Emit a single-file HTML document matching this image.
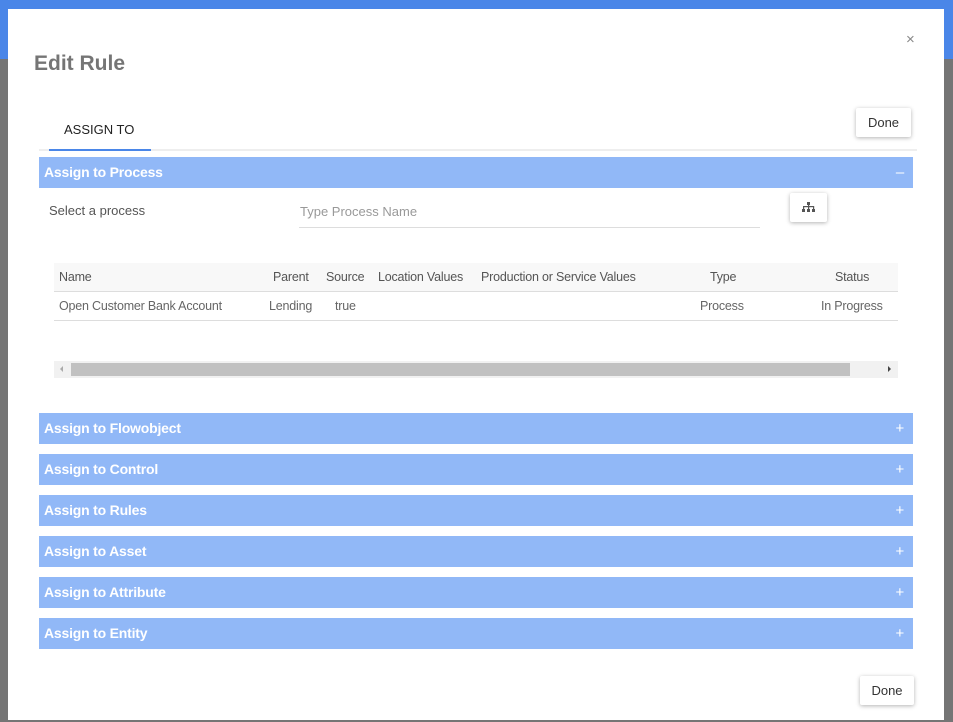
<!DOCTYPE html>
<html><head><style>
body{margin:0;width:953px;height:722px;position:relative;overflow:hidden;background:#757575;font-family:"Liberation Sans",sans-serif;}
.top{position:absolute;left:0;top:0;width:953px;height:59px;background:#4a86e8;}
.modal{position:absolute;left:8px;top:9px;width:936px;height:711px;background:#fff;}
.abs{position:absolute;}
.bar{position:absolute;left:31px;width:874px;height:31px;background:#91b8f7;color:#fff;font-weight:bold;font-size:14px;line-height:31px;letter-spacing:-0.2px;}
.bar span{position:absolute;left:5px;}
.bar i{position:absolute;right:9px;font-style:normal;font-weight:normal;font-size:15px;}
.btn{position:absolute;background:#fff;box-shadow:0 1px 4px rgba(0,0,0,.3);border-radius:2px;font-size:13px;color:#333;text-align:center;}
.th{position:absolute;top:270px;font-size:12.5px;color:#555;letter-spacing:-0.2px;}
.td{position:absolute;top:299px;font-size:12.5px;color:#666;letter-spacing:-0.2px;}
</style></head><body>
<div class="top"></div>
<div class="modal">
<div class="abs" style="left:26px;top:43px;font-size:21px;font-weight:bold;color:#757575">Edit Rule</div>
<div class="abs" style="left:898px;top:22px;font-size:15px;color:#888">×</div>
<div class="abs" style="left:56px;top:113px;font-size:13px;color:#222">ASSIGN TO</div>
<div class="abs" style="left:31px;top:140px;width:878px;height:2px;background:#eee"></div>
<div class="abs" style="left:41px;top:140px;width:102px;height:2px;background:#4a86e8"></div>
<div class="btn" style="left:848px;top:99px;width:55px;height:29px;line-height:29px">Done</div>
<div class="bar" style="top:148px"><span>Assign to Process</span><i>–</i></div>
<div class="abs" style="left:41px;top:194px;font-size:13px;color:#555">Select a process</div>
<div class="abs" style="left:292px;top:195px;font-size:13px;color:#999">Type Process Name</div>
<div class="abs" style="left:291px;top:218px;width:461px;height:1px;background:#ddd"></div>
<div class="btn" style="left:782px;top:184px;width:37px;height:29px">
<svg class="abs" style="left:12px;top:9px" width="13" height="11" viewBox="0 0 13 11" fill="#555"><rect x="5" y="0" width="3" height="3"/><rect x="1" y="4" width="11" height="1.2"/><rect x="1" y="4" width="1.2" height="3"/><rect x="6" y="3" width="1.2" height="4"/><rect x="11" y="4" width="1.2" height="3"/><rect x="0" y="7" width="3" height="3"/><rect x="5" y="7" width="3" height="3"/><rect x="10" y="7" width="3" height="3"/></svg></div>
</div>
<div class="abs" style="left:54px;top:263px;width:844px;height:28px;background:#f8f8f8;border-bottom:1px solid #ddd"></div>
<div class="abs" style="left:54px;top:320px;width:844px;height:1px;background:#ddd"></div>
<div class="th" style="left:59px">Name</div><div class="th" style="left:273px">Parent</div><div class="th" style="left:326px">Source</div><div class="th" style="left:378px">Location Values</div><div class="th" style="left:481px">Production or Service Values</div><div class="th" style="left:710px">Type</div><div class="th" style="left:835px">Status</div>
<div class="td" style="left:59px">Open Customer Bank Account</div><div class="td" style="left:269px">Lending</div><div class="td" style="left:335px">true</div><div class="td" style="left:700px">Process</div><div class="td" style="left:821px">In Progress</div>
<div class="abs" style="left:54px;top:361px;width:844px;height:17px;background:#f1f1f1"></div>
<div class="abs" style="left:71px;top:363px;width:779px;height:13px;background:#c1c1c1"></div>
<div class="abs" style="left:60px;top:366px;width:0;height:0;border:3px solid transparent;border-right-color:#aaa;border-left:0"></div>
<div class="abs" style="left:888px;top:366px;width:0;height:0;border:3px solid transparent;border-left-color:#444;border-right:0"></div>
<div style="position:absolute;left:8px;top:0">
<div class="bar" style="top:413px"><span>Assign to Flowobject</span><i>+</i></div>
<div class="bar" style="top:454px"><span>Assign to Control</span><i>+</i></div>
<div class="bar" style="top:495px"><span>Assign to Rules</span><i>+</i></div>
<div class="bar" style="top:536px"><span>Assign to Asset</span><i>+</i></div>
<div class="bar" style="top:577px"><span>Assign to Attribute</span><i>+</i></div>
<div class="bar" style="top:618px"><span>Assign to Entity</span><i>+</i></div>
</div>
<div class="btn" style="left:860px;top:676px;width:54px;height:29px;line-height:29px">Done</div>
</body></html>
